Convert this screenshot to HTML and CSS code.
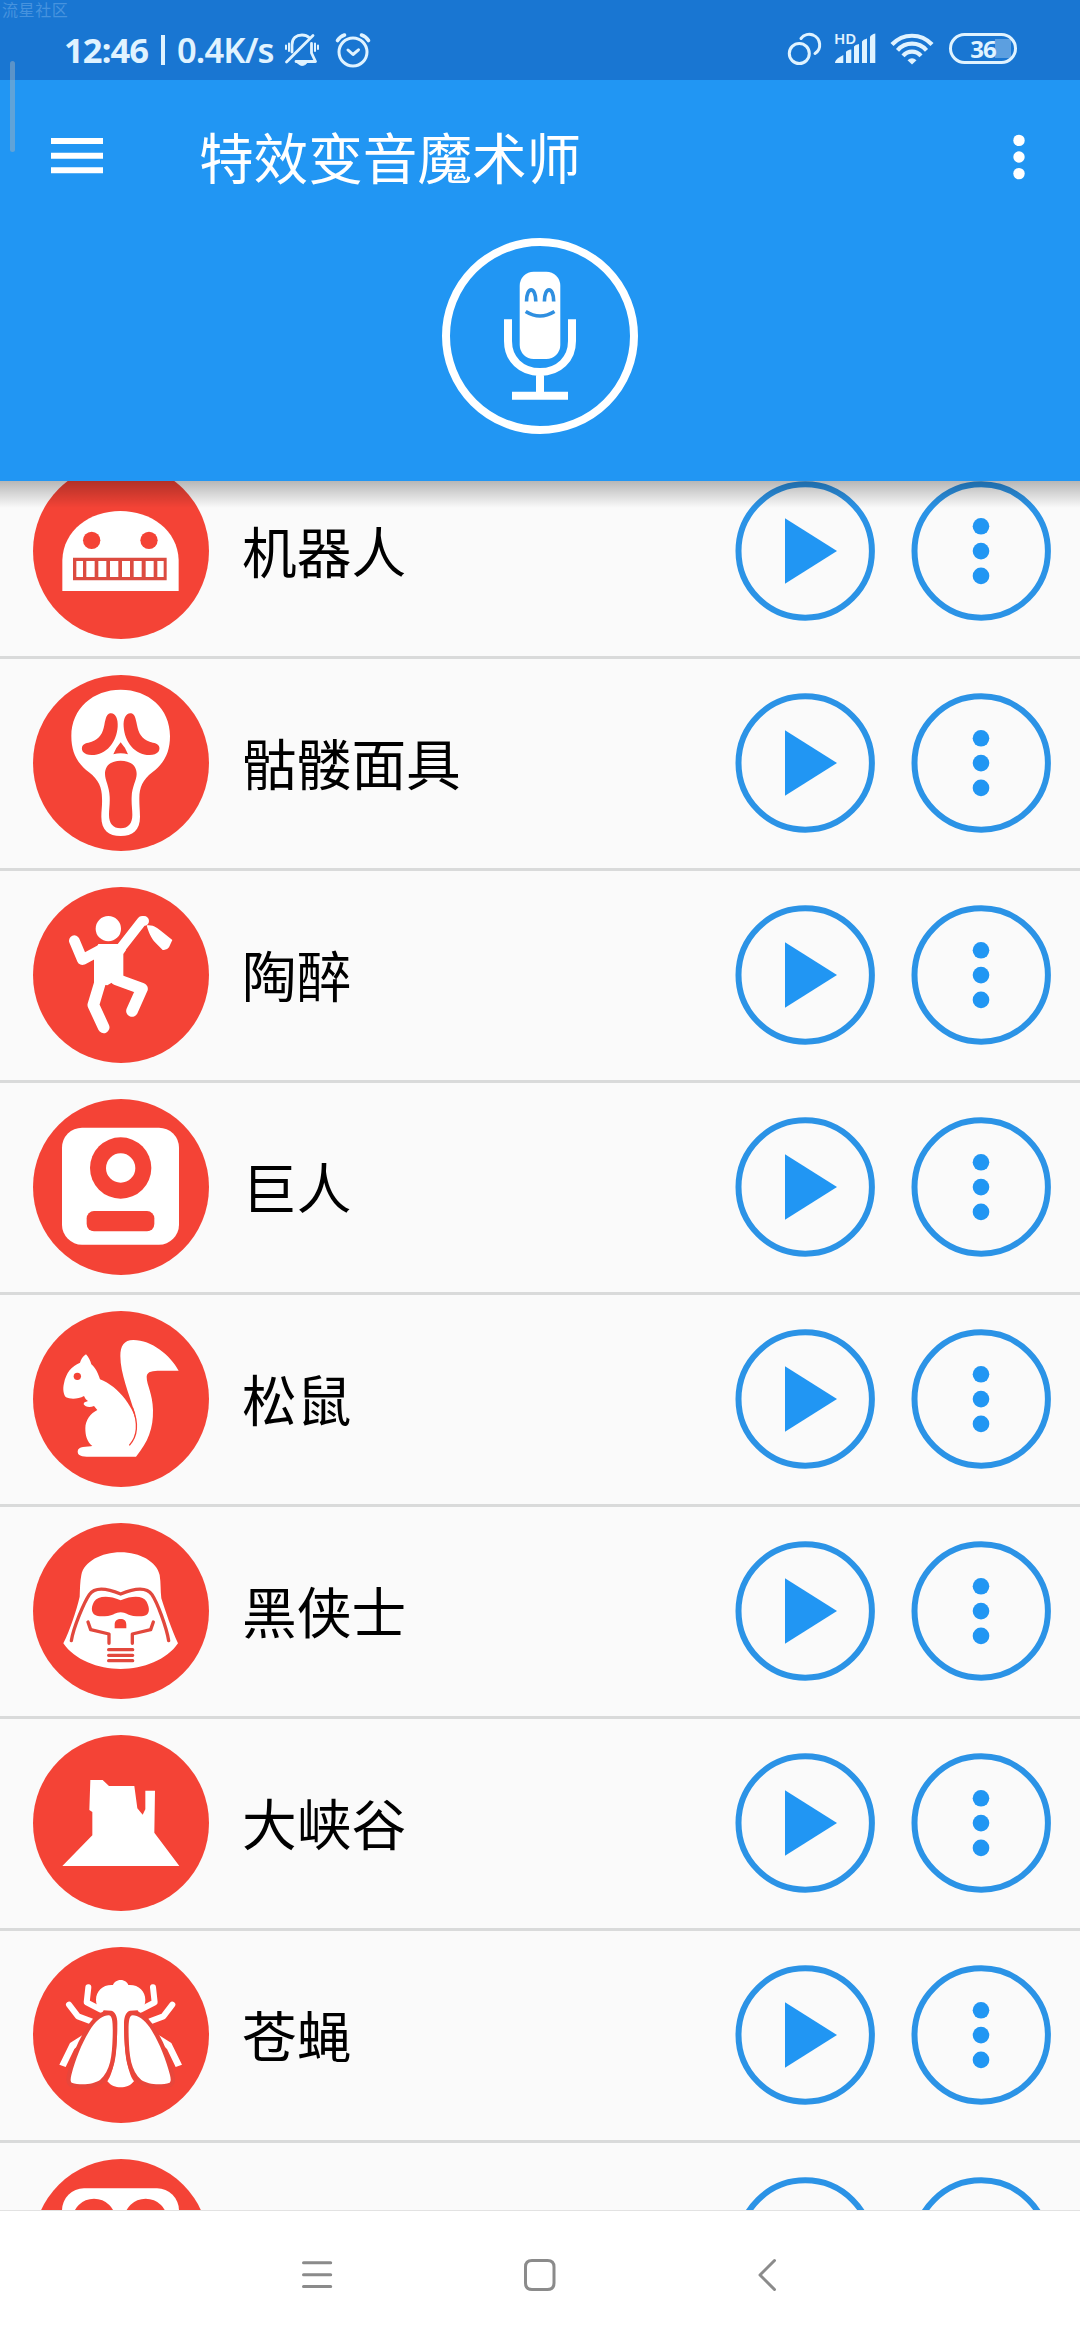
FILE: index.html
```html
<!DOCTYPE html>
<html lang="zh-CN">
<head>
<meta charset="utf-8">
<title>特效变音魔术师</title>
<link rel="stylesheet" href="styles.css">
</head>
<body>
<svg class="defs" aria-hidden="true">
  <symbol id="play" viewBox="0 0 140 140">
    <circle cx="70.2" cy="70" r="66.7" fill="none" stroke="#2b93e6" stroke-width="6"/>
    <path d="M50 37.3V102.7L102 70Z" fill="#2196f3"/>
  </symbol>
  <symbol id="more" viewBox="0 0 140 140">
    <circle cx="70.2" cy="70" r="66.7" fill="none" stroke="#2b93e6" stroke-width="6"/>
    <g fill="#2196f3"><circle cx="70" cy="45.3" r="8.3"/><circle cx="70" cy="70.1" r="8.3"/><circle cx="70" cy="94.9" r="8.3"/></g>
  </symbol>
</svg>
<div class="screen">
  <div class="watermark">流星社区</div>
  <div class="edge-handle"></div>
  <div class="status">
    <span class="clock">12:46</span>
    <span class="sep"></span>
    <span class="speed">0.4K/s</span>
    <svg class="st-bell" viewBox="284 32 36 36" width="36" height="36" fill="none" stroke="#e0f3ff" stroke-width="2.8" stroke-linecap="round" stroke-linejoin="round">
      <path d="M292 52V45C292 38 296.500 35 302 35C305 35 307.500 36 309 37.500M311.500 43.500V53L315.500 61.500H296"/>
      <path d="M313 35.500L286.500 62"/>
      <path d="M289 43.500V51M286 45.500V49M315 43.500V51M318 45.500V49" stroke-width="2"/>
      <path d="M298 63.500H306.500Q302 67.500 298 63.500Z" fill="#e0f3ff" stroke-width="1"/>
    </svg>
    <svg class="st-alarm" viewBox="334 32 38 36" width="38" height="36" fill="none" stroke="#e0f3ff" stroke-width="3" stroke-linecap="round" stroke-linejoin="round">
      <circle cx="353" cy="52" r="14"/>
      <path d="M348 50L353 54.500L358.500 49.800"/>
      <path d="M337.500 40.500Q340 36.500 344.500 35M368.500 40.500Q366 36.500 361.500 35" stroke-width="3.600"/>
    </svg>
    <span class="spring"></span>
    <svg viewBox="786 32 36 36" width="36" height="36" fill="none" stroke="#e0f3ff" stroke-width="3" stroke-linecap="round">
      <circle cx="798.300" cy="53.500" r="10"/>
      <path d="M800 38.500C803 34.500 808 33.500 812 35C820 38.500 821 49 814 53.500"/>
    </svg>
    <div class="signal">
      <span class="hd">HD</span>
      <svg viewBox="833 32 43 33" width="43" height="33" fill="#e0f3ff">
        <path d="M834 63Q834 60 838 57.500L842.300 55V63ZM845 63V52Q846 50 850.300 49.500V63ZM853 63V46.500Q854 44.800 858 44V63ZM861 63V41.500Q862 39.500 866 38.500V63ZM869 63V37Q870 34.500 874.300 33.500V63Z"/>
      </svg>
    </div>
    <svg class="st-wifi" viewBox="889 32 44 34" width="44" height="34" fill="none" stroke="#e0f3ff" stroke-width="4.200">
      <path d="M891 44.500C902 32.800 920 32.800 931 44.500M896.500 50.300C904.500 41.500 917.500 41.500 925.500 50.300M902 55.800C907 50.300 915 50.300 920 55.800"/>
      <path d="M906.500 60.300Q911 56 915.500 60.300L911 64.500Z" fill="#e0f3ff" stroke="none"/>
    </svg>
    <div class="battery">36</div>
  </div>
  <header class="header">
    <div class="toolbar">
      <svg class="burger" viewBox="0 0 52 36" width="52" height="36"><path d="M0 3H52M0 17.700H52M0 32.300H52" stroke="#fff" stroke-width="6"/></svg>
      <h1>特效变音魔术师</h1>
      <svg class="overflow" viewBox="0 0 14 48" width="14" height="48" fill="#fff"><circle cx="7" cy="7.400" r="5.700"/><circle cx="7" cy="24" r="5.700"/><circle cx="7" cy="40.600" r="5.700"/></svg>
    </div>
    <svg class="mic" viewBox="442 238 196 196" width="196" height="196" fill="none" stroke="#fff" stroke-width="8">
      <circle cx="540" cy="336" r="94"/>
      <rect x="519.700" y="271.700" width="40.600" height="87.300" rx="14" fill="#fff" stroke="none"/>
      <path d="M508 319.300V341C508 359 521 372 540 372S572 359 572 341V319.300M540 372V394M512 395.800H568"/>
      <g stroke="#2f8fe0" stroke-width="3.600"><path d="M526.500 301.500C526.500 286 535.800 286 535.800 301.500M544.400 301.500C544.400 286 553.700 286 553.700 301.500M525.700 311.500Q540 320.500 554.500 311.500"/></g>
    </svg>
    <div class="shade"></div>
  </header>
  <main class="viewport">
    <ul class="voices">
      <li>
        <svg class="avatar" viewBox="99 9 528 528"><path fill="#fff" d="M187 393V300C190 210 270 153 361 153S533 210 536 300V393Z"/><circle cx="275" cy="241" r="26"/><circle cx="447" cy="241" r="26"/><path fill="#dc4b40" d="M219 293H500V361H219Z"/><path fill="#fff" d="M229 303h20v48h-20zM259 303h25v48h-25zM295 303h24v48h-24zM330 303h25v48h-25zM366 303h24v48h-24zM401 303h24v48h-24zM437 303h24v48h-24zM472 303h19v48h-19z"/></svg>
        <span class="name">机器人</span><svg class="btn"><use href="#play"/></svg><svg class="btn"><use href="#more"/></svg>
      </li>
      <li>
        <svg class="avatar" viewBox="99 645 528 528"><path fill="#fff" d="M362 689C445 689 510 745 510 828C510 880 490 912 457 937C428 960 418 982 418 1015C418 1040 420 1050 420 1070C420 1110 398 1128 362 1128S304 1110 304 1070C304 1050 307 1040 306 1015C306 982 296 960 267 937C234 912 214 880 214 828C214 745 280 689 362 689Z"/><path d="M330 760C345 757 355 775 353 800C350 845 320 885 275 885C250 885 244 872 246 862C248 850 262 849 275 845C300 836 308 820 313 795C317 775 320 762 330 760Z"/><path d="M330 760C345 757 355 775 353 800C350 845 320 885 275 885C250 885 244 872 246 862C248 850 262 849 275 845C300 836 308 820 313 795C317 775 320 762 330 760Z" transform="matrix(-1 0 0 1 724 0)"/><path d="M362 847Q376 862 384 883Q362 876 340 883Q348 862 362 847ZM362 902C395 902 410 920 410 942C410 960 396 980 395 1010C394 1035 397 1045 397 1065C397 1090 385 1105 362 1105S327 1090 327 1065C327 1045 330 1035 329 1010C328 980 315 960 315 942C315 920 329 902 362 902Z"/></svg>
        <span class="name">骷髅面具</span><svg class="btn"><use href="#play"/></svg><svg class="btn"><use href="#more"/></svg>
      </li>
      <li>
        <svg class="avatar" viewBox="39 51 528 528"><g fill="#fff"><circle cx="265" cy="176" r="38"/><path d="M235 222H297L318 240L310 252V318L262 346L222 340V250Z"/><path d="M380 166C400 163 414 175 428 187L457 210L447 232Q440 242 428 240L405 217C392 202 386 188 380 166Z"/></g><g fill="none" stroke="#fff" stroke-linecap="round" stroke-linejoin="round"><path stroke-width="32" d="M163 212L187 269L240 241"/><path stroke-width="30" d="M298 240L366 153L372 153"/><path stroke-width="35" d="M241 335L220 405L251 472M288 328L366 356L336 423"/></g></svg>
        <span class="name">陶醉</span><svg class="btn"><use href="#play"/></svg><svg class="btn"><use href="#more"/></svg>
      </li>
      <li>
        <svg class="avatar" viewBox="39 687 528 528"><rect fill="#fff" x="126" y="773" width="351" height="351" rx="60"/><circle cx="302" cy="894" r="92"/><circle fill="#fff" cx="302" cy="894" r="44"/><rect x="200" y="1023" width="203" height="61" rx="22"/></svg>
        <span class="name">巨人</span><svg class="btn"><use href="#play"/></svg><svg class="btn"><use href="#more"/></svg>
      </li>
      <li>
        <svg class="avatar" viewBox="39 33 528 528"><path fill="#fff" d="M476 212C450 165 395 120 340 120C312 120 301 138 301 168C301 220 328 285 343 335C352 370 352 410 326 437L220 437C200 441 173 437 173 455C173 470 195 470 215 470H348C385 425 400 385 399 330C398 280 380 255 380 230C381 213 400 212 420 212Z"/><path fill="#fff" d="M198 163C206 172 211 182 214 193C228 205 234 220 240 238C295 258 349 330 350 378C348 405 340 422 326 439H218C200 425 196 405 196 385C196 360 212 340 232 330L222 318C208 324 195 320 191 313C191 305 200 306 204 303C198 300 195 295 192 288C175 298 150 298 138 292C130 285 128 265 132 250C138 218 155 198 180 188C183 178 188 170 198 163Z"/><path fill="none" stroke="#f44336" stroke-width="4" d="M337 322C355 368 354 408 328 436"/><circle cx="172" cy="229" r="11"/></svg>
        <span class="name">松鼠</span><svg class="btn"><use href="#play"/></svg><svg class="btn"><use href="#more"/></svg>
      </li>
      <li>
        <svg class="avatar" viewBox="39 669 528 528"><path fill="#fff" d="M302 757C360 757 410 785 419 825C423 850 421 870 424 895C435 930 455 990 474 1030C440 1080 370 1107 302 1107C234 1107 164 1080 130 1030C150 990 170 930 179 890C180 865 180 845 184 825C192 785 244 757 302 757Z"/><path fill="none" stroke="#e2483d" stroke-width="10" stroke-linecap="round" stroke-linejoin="round" d="M154 1022C161 980 192 908 208 884C224 860 255 862 302 882C349 862 380 860 396 884C412 908 439 980 446 1022M204 966L212 989L267 1002V1030M400 966L392 989L337 1002V1030M266 1049H338M266 1066H338M266 1082H338"/><path d="M302 901C340 885 370 888 380 905C390 925 388 938 380 944C370 951 355 949 340 948C322 946 318 937 302 937S282 946 264 948C249 949 234 951 224 944C216 938 211 925 222 905C234 888 264 885 302 901ZM284 985V974C284 962 292 957 302 957S319 962 319 974V985Z"/></svg>
        <span class="name">黑侠士</span><svg class="btn"><use href="#play"/></svg><svg class="btn"><use href="#more"/></svg>
      </li>
      <li>
        <svg class="avatar" viewBox="39 45 528 528"><path fill="#fff" d="M127 438L217 346V276L208 270L211 180H248L267 198H343L352 265L368 284L376 268V212H405L403 338L478 438Z"/></svg>
        <span class="name">大峡谷</span><svg class="btn"><use href="#play"/></svg><svg class="btn"><use href="#more"/></svg>
      </li>
      <li>
        <svg class="avatar" viewBox="39 681 528 528"><g fill="none" stroke="#fff" stroke-width="18" stroke-linejoin="round"><path stroke-linecap="round" d="M205 802L200 847L242 869M147 854L174 889L214 904M399 802L404 847L362 869M457 854L430 889L390 904"/></g><path fill="#fff" d="M189 944L150 969L118 1034L137 1041L163 987L176 975ZM415 944L454 969L486 1034L467 1041L441 987L428 975Z"/><path fill="#fff" d="M302 780C314 780 322 787 325 795C355 793 376 812 376 840C376 852 372 860 364 870L330 872C318 875 312 890 312 910C312 970 318 1050 342 1084C330 1098 318 1102 302 1102S274 1098 262 1084C286 1050 292 970 292 910C292 890 286 875 274 872L240 870C232 860 228 852 228 840C228 812 249 793 279 795C282 787 290 780 302 780Z"/><path class="wing" d="M266 886C278 886 279 910 278 950C276 1010 272 1050 240 1080C220 1094 180 1096 155 1088C150 1084 152 1075 154 1065C168 1010 190 960 215 922C232 898 250 886 266 886Z"/><path class="wing" transform="matrix(-1 0 0 1 604 0)" d="M266 886C278 886 279 910 278 950C276 1010 272 1050 240 1080C220 1094 180 1096 155 1088C150 1084 152 1075 154 1065C168 1010 190 960 215 922C232 898 250 886 266 886Z"/></svg>
        <span class="name">苍蝇</span><svg class="btn"><use href="#play"/></svg><svg class="btn"><use href="#more"/></svg>
      </li>
      <li>
        <svg class="avatar" viewBox="0 0 528 528"><rect fill="#fff" x="87" y="88" width="351" height="351" rx="66"/><circle cx="183" cy="184" r="65"/><circle cx="338" cy="184" r="65"/></svg>
        <span class="name"></span><svg class="btn"><use href="#play"/></svg><svg class="btn"><use href="#more"/></svg>
      </li>
    </ul>
  </main>
  <nav class="navbar">
    <svg viewBox="300 2257 34 36" width="34" height="36"><path d="M303.500 2262.700H330.700M303.500 2274.700H330.700M303.500 2286.600H330.700"/></svg>
    <svg viewBox="522 2257 36 36" width="36" height="36"><path d="M532 2260.500H547.500Q554 2260.500 554 2267V2283Q554 2289.500 547.500 2289.500H532Q525.500 2289.500 525.500 2283V2267Q525.500 2260.500 532 2260.500Z"/></svg>
    <svg viewBox="756 2257 22 36" width="22" height="36"><path d="M774.500 2260.500L760 2275L774.500 2289.500"/></svg>
  </nav>
</div>
</body>
</html>
```
FILE: styles.css
```css
* { box-sizing: border-box; }
body {
  margin: 0;
  background: #fff;
  font-family: "Noto Sans CJK SC", "Noto Sans", sans-serif;
}
svg { display: block; flex: none; }
.defs { position: absolute; width: 0; height: 0; }
.screen {
  position: relative;
  width: 1080px;
  height: 2340px;
  display: flex;
  flex-direction: column;
  overflow: hidden;
}
.watermark {
  position: absolute;
  left: 2px;
  top: 0;
  z-index: 4;
  padding-top: 1px;
  font-size: 16px;
  line-height: 16px;
  letter-spacing: .6px;
  color: #4793de;
}
.edge-handle {
  position: absolute;
  left: 10px;
  top: 61px;
  z-index: 4;
  width: 5px;
  height: 91px;
  border-radius: 3px;
  background: rgba(160, 175, 190, .5);
}
.status {
  height: 80px;
  flex: none;
  display: flex;
  align-items: flex-start;
  padding: 32px 63px 0 64px;
  background: #1976d2;
  color: #e0f3ff;
  font-family: "Noto Sans", sans-serif;
}
.clock, .speed {
  font-size: 34.5px;
  line-height: 35px;
  white-space: nowrap;
  height: 36px;
}
.clock { width: 97px; font-weight: 700; letter-spacing: -.9px; }
.sep { width: 4px; height: 30px; margin-top: 3px; background: #e0f3ff; }
.speed { width: 119px; padding-left: 12px; font-weight: 600; letter-spacing: -.9px; }
.st-alarm { margin-left: 14px; }
.spring { flex: 1; }
.signal { position: relative; margin-left: 11px; }
.hd {
  position: absolute;
  left: 0;
  top: 0;
  font-size: 15px;
  line-height: 13px;
  font-weight: 600;
}
.st-wifi { margin-left: 13px; }
.battery {
  width: 68px;
  height: 31px;
  margin: 1px 0 0 15px;
  border: 3px solid #e0f3ff;
  border-radius: 16px;
  background: linear-gradient(90deg, #5c9fe0, #5c9fe0) no-repeat 43px 3px / 16px 19px;
  font-size: 24px;
  line-height: 25px;
  font-weight: 700;
  letter-spacing: -1px;
  text-align: center;
}
.header {
  position: relative;
  z-index: 2;
  flex: none;
  height: 401px;
  background: #2196f3;
  color: #fff;
}
.toolbar {
  display: flex;
  align-items: center;
  height: 154px;
  padding: 0 54px 0 51px;
}
.burger { margin-bottom: 3px; }
h1 {
  flex: 1;
  margin: 0 0 2px 96px;
  font-size: 54.6px;
  line-height: 80px;
  font-weight: 400;
}
.mic { margin: 4px auto 0; }
.shade {
  position: absolute;
  left: 0;
  right: 0;
  top: 100%;
  height: 27px;
  background: linear-gradient(rgba(0, 0, 0, .27), rgba(0, 0, 0, .16) 40%, rgba(0, 0, 0, 0));
}
.viewport {
  flex: none;
  height: 1729px;
  overflow: hidden;
  background: #fafafa;
}
.voices {
  margin: -34px 0 0;
  padding: 0;
  list-style: none;
}
.voices li {
  display: flex;
  align-items: center;
  height: 212px;
  padding: 16px 29px 17px 33px;
  border-bottom: 3px solid #d9dada;
}
.avatar {
  width: 176px;
  height: 176px;
  border-radius: 50%;
  background: #f44336;
  fill: #f44336;
}
.wing { fill: #fff; stroke: #e8463b; stroke-width: 26px; paint-order: stroke; }
.name {
  flex: 1;
  padding: 0 0 3px 33px;
  font-size: 54.7px;
  line-height: 80px;
  color: #000;
}
.btn { width: 140px; height: 140px; }
.btn + .btn { margin-left: 36px; }
.navbar {
  height: 130px;
  display: flex;
  align-items: flex-start;
  padding: 46px 0 0 300px;
  border-top: 1px solid #e2e2e2;
  fill: none;
  stroke: #8b8b8b;
  stroke-width: 3px;
  stroke-linecap: round;
  stroke-linejoin: round;
}
.navbar svg + svg { margin-left: 188px; }
.navbar svg:last-child { margin-left: 198px; }
```
